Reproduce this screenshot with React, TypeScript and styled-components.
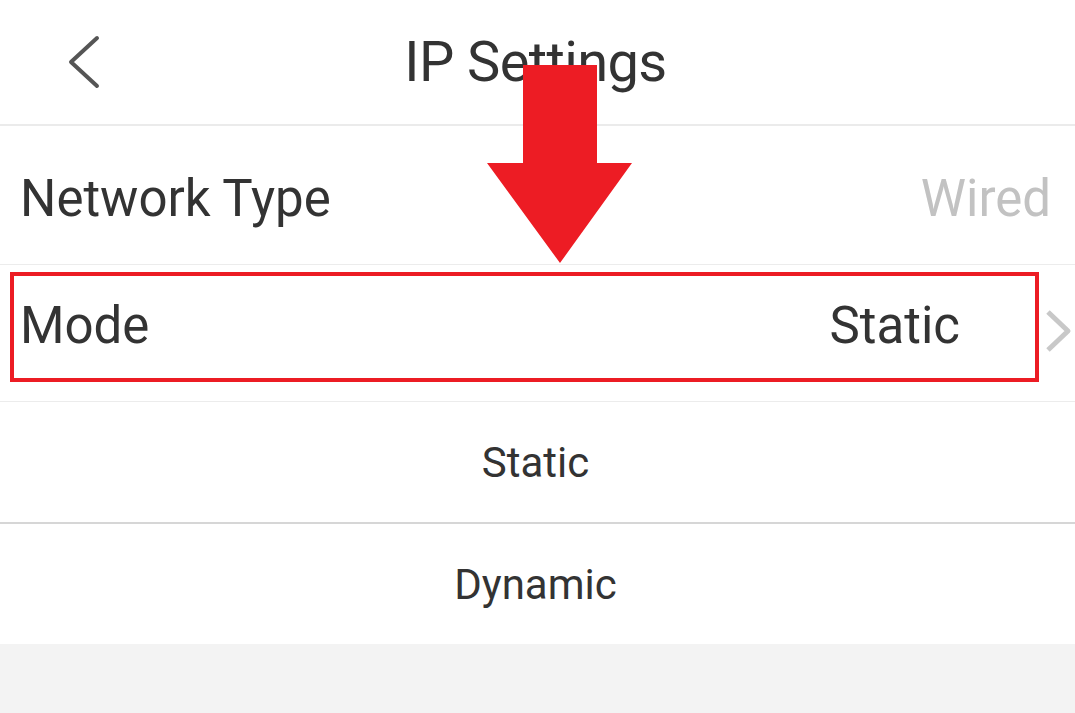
import React from 'react';
import styled, {createGlobalStyle} from 'styled-components';

const GlobalStyle = createGlobalStyle`
  body{
    margin: 0;
    background: #f3f3f3;
    font-family: Roboto, "Liberation Sans", sans-serif;
    color: #333;
  }
`;

const Page = styled.div`
  position: relative;
  display: flex;
  flex-direction: column;
  width: 1075px;
  min-height: 713px;
  background: #f3f3f3;
`;

const Header = styled.header`
  display: grid;
  grid-template-columns: 1fr auto 1fr;
  align-items: center;
  height: 124px;
  background: #fff;
  border-bottom: 2px solid #ebebeb;
  >.back{
    padding-left: 66px;
    display: flex;
    align-items: center;
  }
`;

const Title = styled.h1`
  margin: 0 0 0 -4px;
  font-size: 56px;
  font-weight: 400;
  color: #333;
  letter-spacing: -0.6px;
`;

const List = styled.section`
  background: #fff;
`;

const Row = styled.div<{$height: number; $shift?: number; $padRight?: number}>`
  position: relative;
  display: flex;
  justify-content: space-between;
  align-items: center;
  height: ${p => p.$height}px;
  box-sizing: border-box;
  padding: 0 ${p => p.$padRight ?? 24}px 0 20px;
  padding-top: ${p => Math.max(p.$shift ?? 0, 0)}px;
  padding-bottom: ${p => Math.max(-(p.$shift ?? 0), 0)}px;
  border-bottom: 1px solid #ececec;
  font-size: 51px;
`;

const Label = styled.span`
  color: #333;
`;

const Value = styled.span<{$muted?: boolean}>`
  color: ${p => p.$muted ? '#c2c2c2' : '#333'};
`;

const Right = styled.div`
  display: flex;
  align-items: center;
  gap: 85px;
`;

const Chevron = styled.svg`
  margin-top: 12px;
`;

const Highlight = styled.span`
  position: absolute;
  left: 10px;
  top: 7px;
  width: 1029px;
  height: 110px;
  box-sizing: border-box;
  border: 4px solid #ec1c24;
  pointer-events: none;
`;

const Options = styled.div`
  display: flex;
  flex-direction: column;
  background: #fff;
`;

const Option = styled.div`
  display: flex;
  justify-content: center;
  align-items: center;
  height: 120px;
  padding-right: 4px;
  font-size: 42px;
  color: #333;
  & + &{
    border-top: 2px solid #d6d6d6;
  }
`;

const Arrow = styled.svg`
  position: absolute;
  left: 487px;
  top: 65px;
`;

export default function App() {
  return (
    <>
      <GlobalStyle/>
      <Page>
        <Header>
          <div className="back">
            <svg width="36" height="56" viewBox="0 0 36 56">
              <path d="M31 4 L5 28 L31 52" fill="none" stroke="#555" strokeWidth="4" strokeLinecap="round" strokeLinejoin="round"/>
            </svg>
          </div>
          <Title>IP Settings</Title>
          <div/>
        </Header>
        <List>
          <Row $height={139} $shift={6}>
            <Label>Network Type</Label>
            <Value $muted>Wired</Value>
          </Row>
          <Row $height={137} $shift={-16} $padRight={3}>
            <Label>Mode</Label>
            <Right>
              <Value>Static</Value>
              <Chevron width="27" height="44" viewBox="0 0 27 44">
                <path d="M3 3 L23 22 L3 41" fill="none" stroke="#c8c8c8" strokeWidth="5" strokeLinejoin="round"/>
              </Chevron>
            </Right>
            <Highlight/>
          </Row>
        </List>
        <Options>
          <Option>Static</Option>
          <Option>Dynamic</Option>
        </Options>
        <Arrow width="146" height="199" viewBox="0 0 146 199">
          <polygon points="36,0 110,0 110,98 145,98 73,198 0,98 36,98" fill="#ed1c24"/>
        </Arrow>
      </Page>
    </>
  );
}
